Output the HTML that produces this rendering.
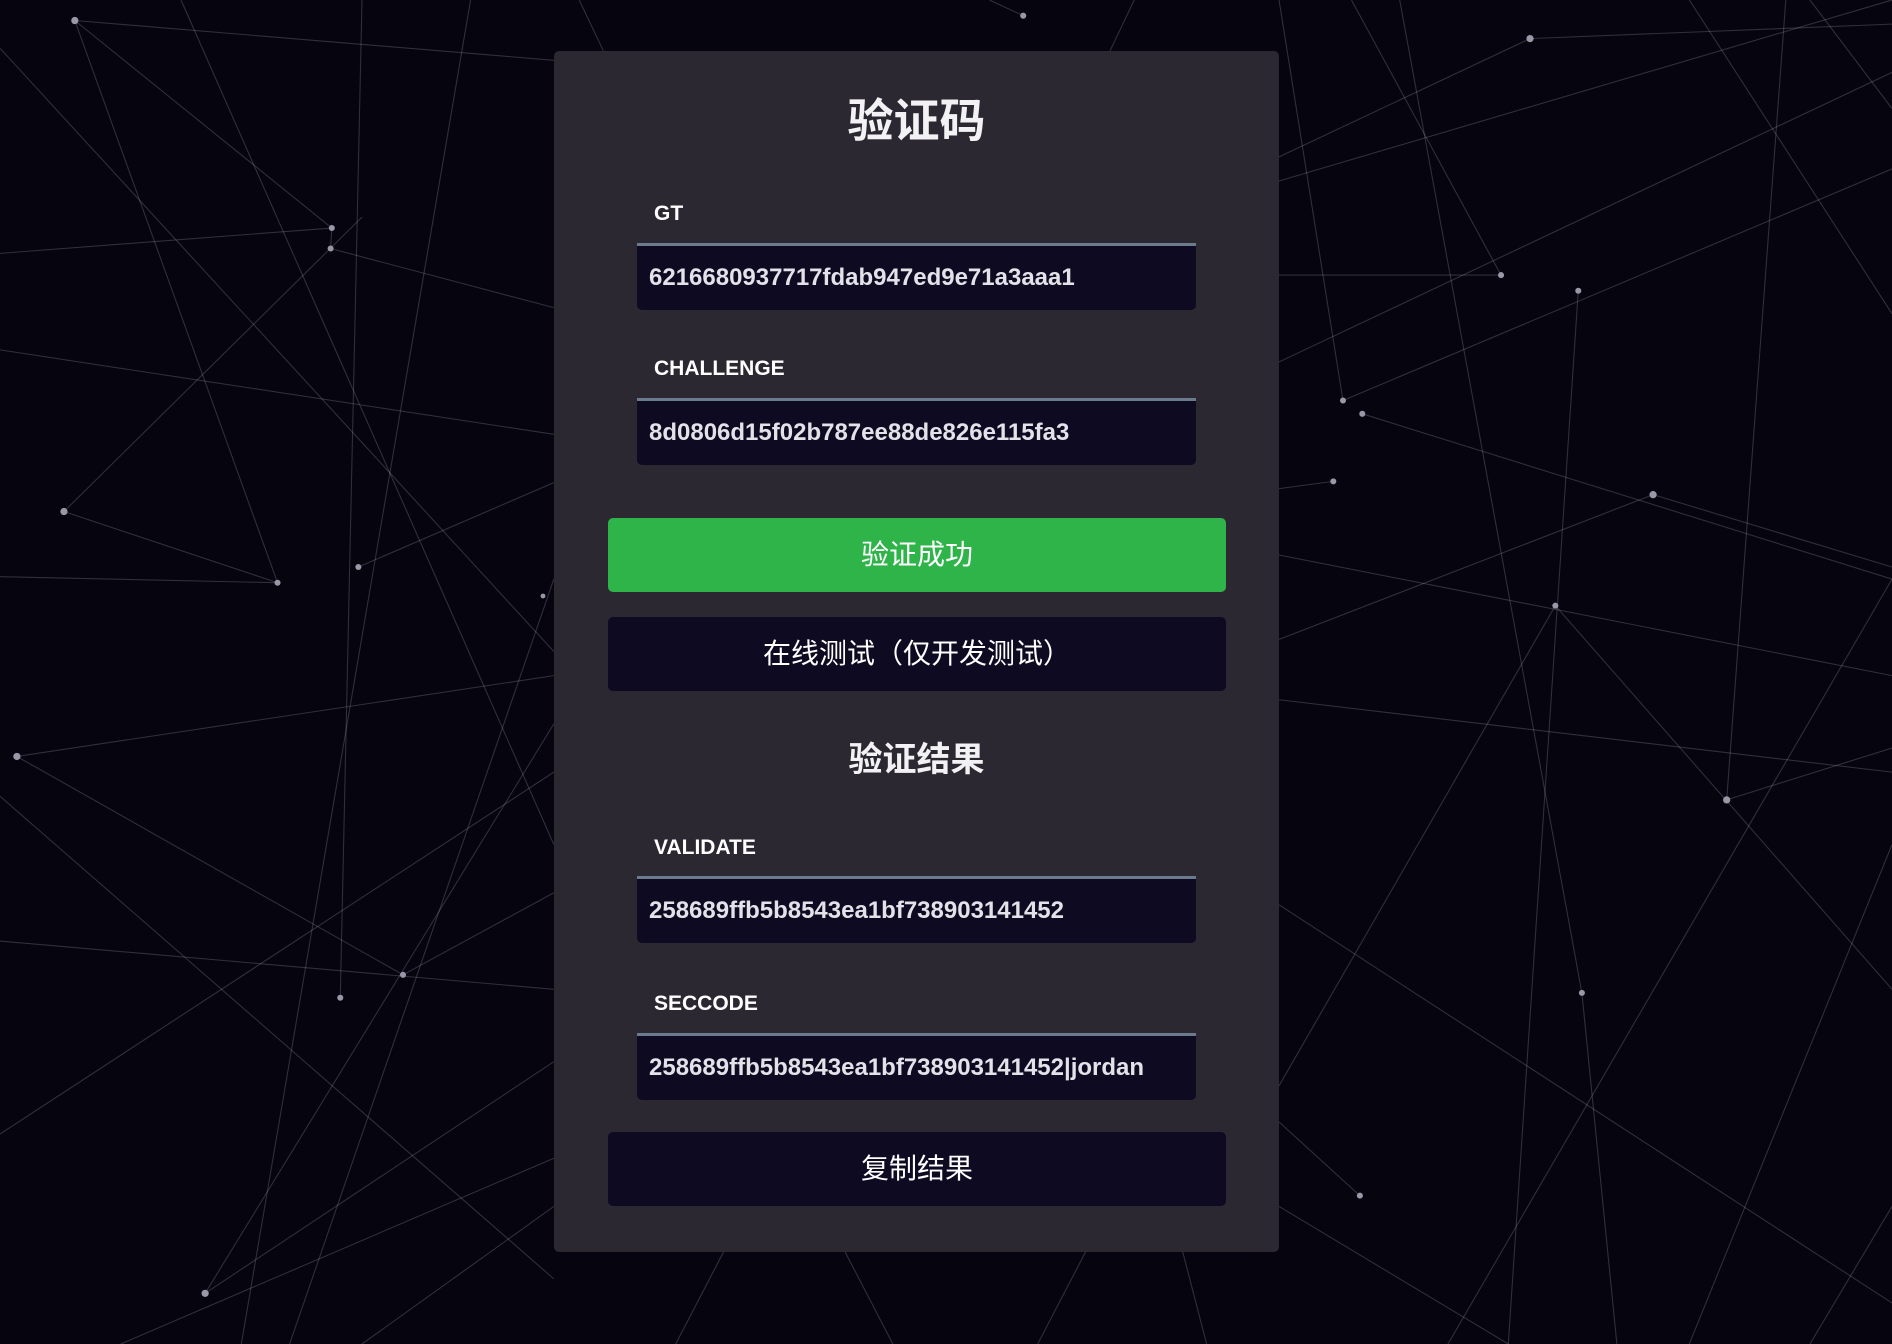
<!DOCTYPE html>
<html><head><meta charset="utf-8">
<style>
html,body{margin:0;padding:0;width:1892px;height:1344px;overflow:hidden;background:#06040f;font-family:"Liberation Sans","Noto Sans CJK SC",sans-serif;}
#bg{position:absolute;left:0;top:0}
.card{position:absolute;left:554px;top:51px;width:725px;height:1201px;background:rgba(44,41,52,0.97);border-radius:5px;}
.abs{position:absolute;}
.title{left:0;width:725px;text-align:center;color:#f2f2f4;font-weight:bold;}
.label{left:100px;color:#fff;font-weight:bold;font-size:21px;line-height:24px;}
.inp{left:83px;width:559px;height:64px;background:#0e0a22;border-top:3px solid #6b7a8c;border-radius:0 0 5px 5px;box-sizing:content-box;}
.inp span{position:absolute;left:12px;top:0;line-height:64px;color:#e2e2e8;font-weight:bold;font-size:24px;}
.btn{left:54px;width:618px;height:74px;border-radius:5px;text-align:center;line-height:74px;color:#fff;font-size:28px;}
</style></head><body>
<svg id="bg" width="1892" height="1344" viewBox="0 0 1568 1114" preserveAspectRatio="none">
<g stroke="rgba(200,200,220,0.22)" stroke-width="0.9" fill="none">
<line x1="62" y1="17" x2="275" y2="189"/><line x1="62" y1="17" x2="459" y2="50"/><line x1="62" y1="17" x2="230" y2="483"/>
<line x1="0" y1="210" x2="275" y2="189"/><line x1="275" y1="189" x2="274" y2="206"/><line x1="274" y1="206" x2="459" y2="255"/>
<line x1="53" y1="424" x2="230" y2="483"/><line x1="53" y1="424" x2="300" y2="180"/><line x1="0" y1="290" x2="459" y2="360"/>
<line x1="297" y1="470" x2="459" y2="400"/><line x1="0" y1="478" x2="230" y2="483"/><line x1="14" y1="627" x2="334" y2="808"/>
<line x1="14" y1="627" x2="459" y2="560"/><line x1="334" y1="808" x2="459" y2="740"/><line x1="282" y1="827" x2="300" y2="0"/>
<line x1="170" y1="1072" x2="459" y2="600"/><line x1="170" y1="1072" x2="459" y2="880"/><line x1="0" y1="940" x2="459" y2="640"/>
<line x1="200" y1="1114" x2="390" y2="0"/><line x1="150" y1="0" x2="459" y2="700"/><line x1="0" y1="40" x2="459" y2="540"/>
<line x1="100" y1="1114" x2="459" y2="960"/><line x1="240" y1="1114" x2="459" y2="480"/><line x1="0" y1="780" x2="459" y2="820"/>
<line x1="300" y1="1114" x2="459" y2="1000"/><line x1="0" y1="660" x2="459" y2="1060"/>
<line x1="848" y1="13" x2="820" y2="0"/><line x1="1268" y1="32" x2="1568" y2="20"/><line x1="1268" y1="32" x2="1060" y2="130"/>
<line x1="1244" y1="228" x2="1060" y2="228"/><line x1="1244" y1="228" x2="1120" y2="0"/><line x1="1308" y1="241" x2="1250" y2="1114"/>
<line x1="1113" y1="332" x2="1060" y2="0"/><line x1="1129" y1="343" x2="1568" y2="480"/><line x1="1113" y1="332" x2="1568" y2="140"/>
<line x1="1105" y1="399" x2="1060" y2="405"/><line x1="1370" y1="410" x2="1060" y2="530"/><line x1="1370" y1="410" x2="1568" y2="470"/>
<line x1="1289" y1="502" x2="1060" y2="900"/><line x1="1289" y1="502" x2="1568" y2="820"/><line x1="1431" y1="663" x2="1568" y2="620"/>
<line x1="1431" y1="663" x2="1480" y2="0"/><line x1="1311" y1="823" x2="1340" y2="1114"/><line x1="1311" y1="823" x2="1160" y2="0"/>
<line x1="1127" y1="991" x2="1060" y2="930"/><line x1="1060" y1="580" x2="1568" y2="640"/><line x1="1060" y1="300" x2="1568" y2="60"/>
<line x1="1200" y1="1114" x2="1568" y2="480"/><line x1="1060" y1="750" x2="1568" y2="1080"/><line x1="1500" y1="1114" x2="1568" y2="1000"/>
<line x1="1060" y1="1000" x2="1250" y2="1114"/><line x1="1060" y1="150" x2="1568" y2="0"/><line x1="1400" y1="1114" x2="1568" y2="700"/>
<line x1="1400" y1="0" x2="1568" y2="260"/><line x1="1500" y1="0" x2="1568" y2="90"/><line x1="1060" y1="460" x2="1568" y2="560"/>
<line x1="700" y1="1037" x2="740" y2="1114"/><line x1="900" y1="1037" x2="860" y2="1114"/><line x1="560" y1="1114" x2="600" y2="1037"/>
<line x1="980" y1="1037" x2="1000" y2="1114"/><line x1="480" y1="0" x2="500" y2="42"/><line x1="940" y1="0" x2="920" y2="42"/>
</g>
<g fill="#9a98a8">
<circle cx="62" cy="17" r="3"/><circle cx="848" cy="13" r="2.5"/><circle cx="1268" cy="32" r="3"/><circle cx="275" cy="189" r="2.5"/>
<circle cx="274" cy="206" r="2.5"/><circle cx="1244" cy="228" r="2.5"/><circle cx="1308" cy="241" r="2.5"/><circle cx="1113" cy="332" r="2.5"/>
<circle cx="1129" cy="343" r="2.5"/><circle cx="53" cy="424" r="3"/><circle cx="1105" cy="399" r="2.5"/><circle cx="1370" cy="410" r="3"/>
<circle cx="297" cy="470" r="2.5"/><circle cx="230" cy="483" r="2.5"/><circle cx="450" cy="494" r="2"/><circle cx="1289" cy="502" r="2.5"/>
<circle cx="14" cy="627" r="3"/><circle cx="1431" cy="663" r="3"/><circle cx="334" cy="808" r="2.5"/><circle cx="282" cy="827" r="2.5"/>
<circle cx="1311" cy="823" r="2.5"/><circle cx="1127" cy="991" r="2.5"/><circle cx="170" cy="1072" r="3"/>
</g>
</svg>
<div class="card">
  <div class="abs title" style="top:44px;font-size:46px;line-height:52px;">验证码</div>
  <div class="abs label" style="top:151px;">GT</div>
  <div class="abs inp" style="top:192px;"><span>6216680937717fdab947ed9e71a3aaa1</span></div>
  <div class="abs label" style="top:306px;">CHALLENGE</div>
  <div class="abs inp" style="top:347px;"><span>8d0806d15f02b787ee88de826e115fa3</span></div>
  <div class="abs btn" style="top:467px;background:#2fb44a;">验证成功</div>
  <div class="abs btn" style="top:566px;background:#0e0a22;">在线测试（仅开发测试）</div>
  <div class="abs title" style="top:689px;font-size:34px;line-height:40px;">验证结果</div>
  <div class="abs label" style="top:785px;">VALIDATE</div>
  <div class="abs inp" style="top:825px;"><span>258689ffb5b8543ea1bf738903141452</span></div>
  <div class="abs label" style="top:941px;">SECCODE</div>
  <div class="abs inp" style="top:982px;"><span>258689ffb5b8543ea1bf738903141452|jordan</span></div>
  <div class="abs btn" style="top:1081px;background:#0e0a22;">复制结果</div>
</div>
</body></html>
